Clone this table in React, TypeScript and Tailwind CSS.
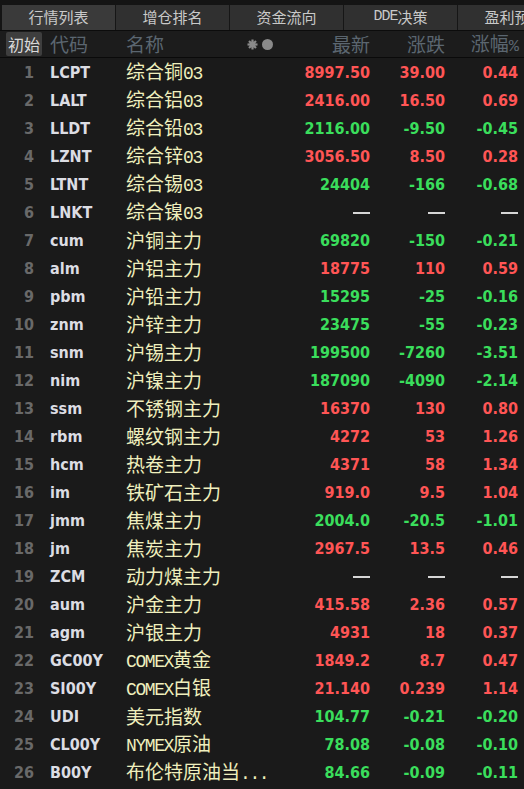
import React from "react";

type Row = [string, string, string, string, string, string, "r" | "g" | "n"];

const rows: Row[] = [
  ["1", "LCPT", "综合铜03", "8997.50", "39.00", "0.44", "r"],
  ["2", "LALT", "综合铝03", "2416.00", "16.50", "0.69", "r"],
  ["3", "LLDT", "综合铅03", "2116.00", "-9.50", "-0.45", "g"],
  ["4", "LZNT", "综合锌03", "3056.50", "8.50", "0.28", "r"],
  ["5", "LTNT", "综合锡03", "24404", "-166", "-0.68", "g"],
  ["6", "LNKT", "综合镍03", "", "", "", "n"],
  ["7", "cum", "沪铜主力", "69820", "-150", "-0.21", "g"],
  ["8", "alm", "沪铝主力", "18775", "110", "0.59", "r"],
  ["9", "pbm", "沪铅主力", "15295", "-25", "-0.16", "g"],
  ["10", "znm", "沪锌主力", "23475", "-55", "-0.23", "g"],
  ["11", "snm", "沪锡主力", "199500", "-7260", "-3.51", "g"],
  ["12", "nim", "沪镍主力", "187090", "-4090", "-2.14", "g"],
  ["13", "ssm", "不锈钢主力", "16370", "130", "0.80", "r"],
  ["14", "rbm", "螺纹钢主力", "4272", "53", "1.26", "r"],
  ["15", "hcm", "热卷主力", "4371", "58", "1.34", "r"],
  ["16", "im", "铁矿石主力", "919.0", "9.5", "1.04", "r"],
  ["17", "jmm", "焦煤主力", "2004.0", "-20.5", "-1.01", "g"],
  ["18", "jm", "焦炭主力", "2967.5", "13.5", "0.46", "r"],
  ["19", "ZCM", "动力煤主力", "", "", "", "n"],
  ["20", "aum", "沪金主力", "415.58", "2.36", "0.57", "r"],
  ["21", "agm", "沪银主力", "4931", "18", "0.37", "r"],
  ["22", "GC00Y", "COMEX黄金", "1849.2", "8.7", "0.47", "r"],
  ["23", "SI00Y", "COMEX白银", "21.140", "0.239", "1.14", "r"],
  ["24", "UDI", "美元指数", "104.77", "-0.21", "-0.20", "g"],
  ["25", "CL00Y", "NYMEX原油", "78.08", "-0.08", "-0.10", "g"],
  ["26", "B00Y", "布伦特原油当...", "84.66", "-0.09", "-0.11", "g"],
];

function Mixed({ text, latin, cjk }: { text: string; latin: string; cjk: string }) {
  const parts = text.split(/([\x00-\x7f]+)/).filter((p) => p.length > 0);
  return (
    <>
      {parts.map((p, i) =>
        /^[\x00-\x7f]+$/.test(p) ? (
          <span key={i} className={latin}>
            {p}
          </span>
        ) : (
          <span key={i} className={cjk}>
            {p}
          </span>
        )
      )}
    </>
  );
}

function Dash() {
  return <span className="inline-block w-[17px] h-[2px] bg-[#d6d6d6] align-middle" />;
}

const numFont =
  "[font-family:'DejaVu_Sans_Condensed','DejaVu_Sans',sans-serif] [font-stretch:condensed] font-bold text-[16px]";

function Cell({ v, color, w }: { v: string; color: string; w: string }) {
  return (
    <div className={`${w} flex items-center justify-end ${numFont} ${color}`}>
      {v === "" ? <Dash /> : v}
    </div>
  );
}

const tabs = ["行情列表", "增仓排名", "资金流向", "DDE决策", "盈利预测"];

export default function App() {
  return (
    <div className="w-[524px] h-[789px] bg-[#1a1a1a] overflow-hidden flex flex-col">
      {/* tab bar */}
      <div className="h-[31px] pt-[5px] pl-[2px] flex bg-[#141414] border-b border-[#0c0c0c] shrink-0 overflow-hidden">
        {tabs.map((t, i) => (
          <div
            key={t}
            className={`w-[114px] shrink-0 h-full flex items-center justify-center border-r border-[#161616] ${
              i === 0 ? "bg-[#3a3a3a]" : "bg-[#303030]"
            } text-[#c9c9c9] whitespace-nowrap overflow-hidden`}
          >
            <Mixed
              text={t}
              latin="[font-family:'Liberation_Mono',monospace] text-[15px] tracking-[-1px]"
              cjk="[font-family:'Noto_Sans_CJK_SC',sans-serif] text-[15px]"
            />
          </div>
        ))}
      </div>
      {/* header */}
      <div className="h-[27px] flex items-center border-b border-[#0a0a0a] shrink-0 bg-[#1c1c1c]">
        <div className="ml-[6px] w-[36px] h-[24px] rounded-[2px] bg-[#3e3e3e] flex items-center justify-center text-[#dadada] text-[16px] [font-family:'Noto_Sans_CJK_SC',sans-serif]">
          初始
        </div>
        <div className="ml-[8px] w-[76px] text-[19px] text-[#5b6670] [font-family:'Noto_Sans_CJK_SC',sans-serif]">
          代码
        </div>
        <div className="w-[121px] text-[19px] text-[#5b6670] [font-family:'Noto_Sans_CJK_SC',sans-serif]">
          名称
        </div>
        <div className="w-[33px] flex items-center gap-[4px]">
          <svg width="11" height="11" viewBox="0 0 11 11">
            <g stroke="#8a8a8a" strokeWidth="2.2" strokeLinecap="butt">
              <line x1="5.5" y1="0.5" x2="5.5" y2="10.5" />
              <line x1="0.5" y1="5.5" x2="10.5" y2="5.5" />
              <line x1="2" y1="2" x2="9" y2="9" />
              <line x1="9" y1="2" x2="2" y2="9" />
            </g>
            <circle cx="5.5" cy="5.5" r="3" fill="#8a8a8a" />
          </svg>
          <span className="inline-block w-[11px] h-[11px] rounded-full bg-[#8a8a8a]" />
        </div>
        <div className="w-[90px] text-right text-[19px] text-[#5b6670] [font-family:'Noto_Sans_CJK_SC',sans-serif]">
          最新
        </div>
        <div className="w-[75px] text-right text-[19px] text-[#5b6670] [font-family:'Noto_Sans_CJK_SC',sans-serif]">
          涨跌
        </div>
        <div className="w-[73px] text-right text-[19px] text-[#5b6670] whitespace-nowrap">
          <span className="[font-family:'Noto_Sans_CJK_SC',sans-serif]">涨幅</span>
          <span className="[font-family:'Liberation_Mono',monospace] text-[17px] tracking-[-1px]">%</span>
        </div>
      </div>
      {/* rows */}
      <div className="flex flex-col">
        {rows.map((r) => {
          const color =
            r[6] === "r" ? "text-[#ff5555]" : r[6] === "g" ? "text-[#3ade5c]" : "text-[#d6d6d6]";
          return (
            <div key={r[0]} className="h-[28px] flex items-center pt-[1px]">
              <div className={`w-[34px] text-right text-[#696969] ${numFont}`}>{r[0]}</div>
              <div className={`ml-[16px] w-[76px] text-[#dcdde3] ${numFont}`}>{r[1]}</div>
              <div className="w-[154px] whitespace-nowrap text-[#efefbd]">
                <Mixed
                  text={r[2]}
                  latin="[font-family:'Liberation_Mono',monospace] text-[18px] tracking-[-1.4px]"
                  cjk="[font-family:'Noto_Sans_CJK_SC',sans-serif] text-[19px]"
                />
              </div>
              <Cell v={r[3]} color={color} w="w-[90px]" />
              <Cell v={r[4]} color={color} w="w-[75px]" />
              <Cell v={r[5]} color={color} w="w-[73px]" />
            </div>
          );
        })}
      </div>
    </div>
  );
}
